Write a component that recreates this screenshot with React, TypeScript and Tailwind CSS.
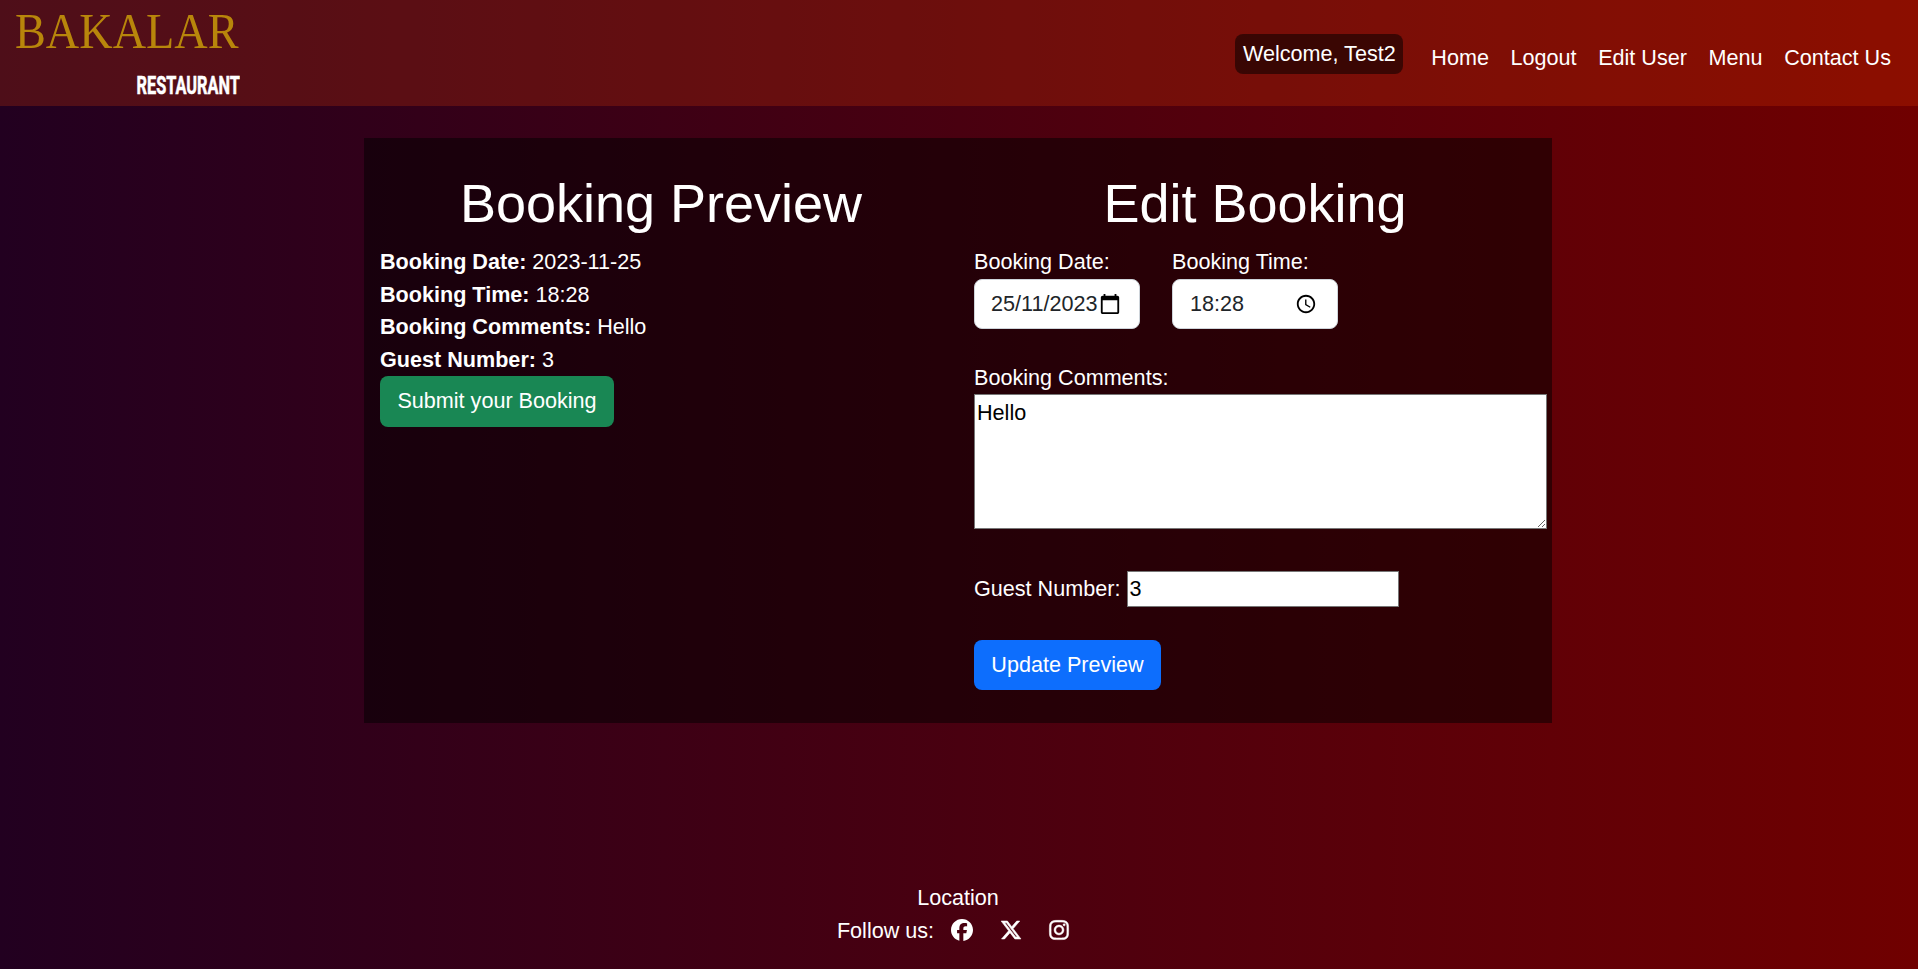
import { FaFacebook, FaXTwitter, FaInstagram } from "react-icons/fa6";

const links = ["Home", "Logout", "Edit User", "Menu", "Contact Us"];

const preview = [
  ["Booking Date:", "2023-11-25"],
  ["Booking Time:", "18:28"],
  ["Booking Comments:", "Hello"],
  ["Guest Number:", "3"],
];

function CalendarIcon() {
  return (
    <svg className="ml-[2px] shrink-0" width="22" height="22" viewBox="0 0 24 24" fill="#000">
      <path d="M20 3h-1V1h-2v2H7V1H5v2H4c-1.1 0-2 .9-2 2v16c0 1.1.9 2 2 2h16c1.1 0 2-.9 2-2V5c0-1.1-.9-2-2-2zm0 18H4V8h16v13z" />
    </svg>
  );
}

function ClockIcon() {
  return (
    <svg width="22" height="22" viewBox="0 0 24 24" fill="#000">
      <path d="M11.99 2C6.47 2 2 6.48 2 12s4.47 10 9.99 10C17.52 22 22 17.52 22 12S17.52 2 11.99 2zM12 20c-4.42 0-8-3.58-8-8s3.58-8 8-8 8 3.58 8 8-3.58 8-8 8zm.5-13H11v6l5.25 3.15.75-1.23-4.5-2.67z" />
    </svg>
  );
}

export default function App() {
  return (
    <div className="flex h-[969px] w-full flex-col overflow-hidden bg-[linear-gradient(90deg,#220020,#700000)] font-['Liberation_Sans',Arial,sans-serif] text-[21.6px] leading-[32.4px] text-white">
      <header className="flex h-[106px] shrink-0 items-start justify-between bg-[#ff4500]/20">
        <div className="flex w-[240px] flex-col items-end">
          <div className="flex h-[62px] w-[225px] items-center justify-start">
            <span className="origin-left scale-x-[0.925] font-['Liberation_Serif',serif] text-[50px] leading-[62px] whitespace-nowrap text-[#b8860b]">
              BAKALAR
            </span>
          </div>
          <div className="flex h-[46px] w-[104px] items-center justify-end">
            <span className="origin-right scale-x-[0.615] font-[Roboto,sans-serif] text-[26.5px] leading-[46px] font-bold whitespace-nowrap [-webkit-text-stroke:0.6px_white]">
              RESTAURANT
            </span>
          </div>
        </div>
        <nav className="flex items-start pt-[34px] pr-[27px]">
          <span className="mr-[28px] h-[40px] w-[168px] rounded-[8px] bg-black/52 pt-[3px] text-center leading-[34px] whitespace-nowrap">
            Welcome, Test2
          </span>
          <ul className="flex gap-[21.6px] pt-[8px]">
            {links.map((l) => (
              <li key={l}>
                <a className="whitespace-nowrap">{l}</a>
              </li>
            ))}
          </ul>
        </nav>
      </header>

      <main className="mt-8 ml-[364px] flex h-[585px] w-[1188px] shrink-0 bg-black/50">
        <section className="w-[594px] pt-[33px] pl-4">
          <h1 className="mb-[10.4px] pr-4 text-center text-[54px] leading-[65px]">Booking Preview</h1>
          {preview.map(([k, v]) => (
            <p key={k}>
              <b>{k}</b> {v}
            </p>
          ))}
          <button className="h-[51px] w-[234px] rounded-[8px] bg-[#198754]">Submit your Booking</button>
        </section>

        <section className="w-[594px] pt-[33px] pl-4">
          <h1 className="mb-[10px] pr-4 text-center text-[54px] leading-[65px]">Edit Booking</h1>
          <div className="flex gap-8">
            <label>
              Booking Date:
              <span className="mt-[1px] flex h-[50px] w-[166px] items-center rounded-[8px] border border-[#ced4da] bg-white pl-[16px] text-[#212529]">
                25/11/2023
                <CalendarIcon />
              </span>
            </label>
            <label>
              Booking Time:
              <span className="mt-[1px] flex h-[50px] w-[166px] items-center justify-between rounded-[8px] border border-[#ced4da] bg-white pr-[20px] pl-[17px] text-[#212529]">
                18:28
                <ClockIcon />
              </span>
            </label>
          </div>
          <label className="mt-[33px] block">
            Booking Comments:
            <textarea
              className="-mt-[1px] block h-[135px] w-[573px] resize border border-[#767676] bg-white p-[2px] text-black"
              defaultValue="Hello"
            />
          </label>
          <label className="mt-[42px] flex items-center">
            Guest Number:
            <input
              className="ml-[7px] h-[36px] w-[272px] border border-[#767676] bg-white px-[1px] text-black"
              defaultValue="3"
            />
          </label>
          <button className="mt-[33px] h-[50px] w-[187px] rounded-[8px] bg-[#0d6efd]">Update Preview</button>
        </section>
      </main>

      <footer className="mt-auto flex flex-col items-center pr-[2px] pb-[22px]">
        <a>Location</a>
        <div className="flex items-center pr-[9px]">
          Follow us:
          <FaFacebook className="mb-[2px] ml-[17px] size-[22px]" />
          <FaXTwitter className="mb-[2px] ml-[27px] size-[22px] stroke-white [stroke-width:14]" />
          <FaInstagram className="mb-[2px] ml-[26px] size-[22px] stroke-white [stroke-width:12]" />
        </div>
      </footer>
    </div>
  );
}
